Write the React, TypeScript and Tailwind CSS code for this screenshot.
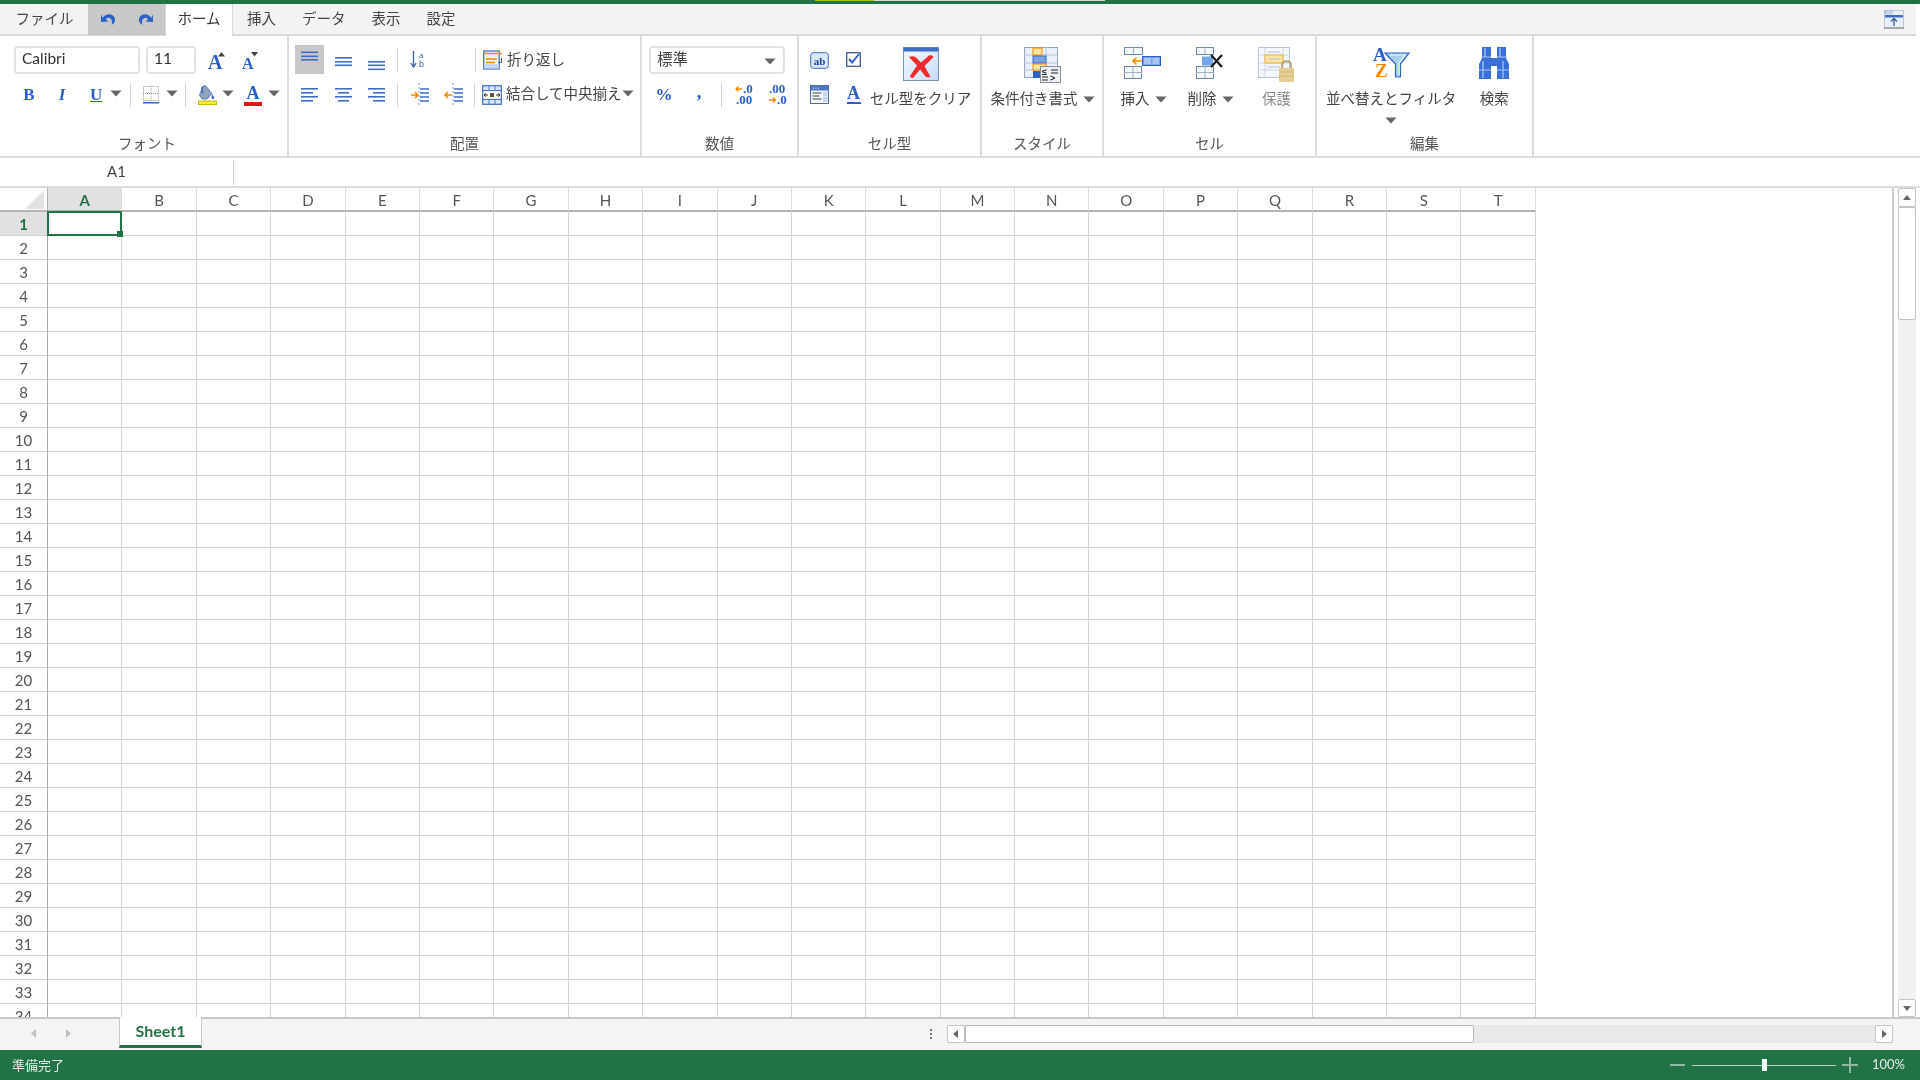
import React from "react";

const blue = "#2f62c4";
const orange = "#f08a00";
const columns = "ABCDEFGHIJKLMNOPQRST".split("");
const rows = Array.from({ length: 34 }, (_, i) => i + 1);

function Caret({ className = "" }: { className?: string }) {
  return (
    <svg width="12" height="7" viewBox="0 0 12 7" className={`shrink-0 ${className}`}>
      <path d="M0.5 0.5h11L6 6.5z" fill="#666" />
    </svg>
  );
}

function Sep({ className = "" }: { className?: string }) {
  return <div className={`w-px h-[24px] bg-[#d2d2d2] shrink-0 ${className}`} />;
}

function Lines({ ys, spans, dy = 0 }: { ys: number[]; spans: [number, number][]; dy?: number }) {
  return (
    <svg width="17" height="24" viewBox="0 0 17 24" className="shrink-0">
      {ys.map((y, i) => (
        <rect key={i} x={spans[i % spans.length][0]} y={y + dy} width={spans[i % spans.length][1]} height="1.6" fill="#3f6cc4" />
      ))}
    </svg>
  );
}

function IconBtn({ active, children }: { active?: boolean; children: React.ReactNode }) {
  return (
    <div className={`w-[29px] h-[29px] flex items-center justify-center shrink-0 ${active ? "bg-[#c8c8c8]" : ""}`}>
      {children}
    </div>
  );
}

function GrowFont({ down }: { down?: boolean }) {
  return (
    <div className={`relative flex items-end h-[20px] ${down ? "w-[17px] pl-[1px]" : "w-[17px]"}`}>
      <span className={`font-['Liberation_Serif',serif] font-bold leading-none text-[#2a5fc4] ${down ? "text-[16px]" : "text-[20px]"}`}>A</span>
      <svg width="7" height="5" viewBox="0 0 7 5" className="absolute right-0 top-0">
        <path d={down ? "M0 0h7L3.5 4.5z" : "M3.5 0L7 4.5H0z"} fill="#444" />
      </svg>
    </div>
  );
}

function BorderIcon() {
  return (
    <svg width="16" height="18" viewBox="0 0 16 18" className="shrink-0">
      <g stroke="#9a9a9a" strokeWidth="1" strokeDasharray="1 1" fill="none">
        <rect x="0.5" y="0.5" width="15" height="14" />
        <path d="M8 0v15M0 7.5h16" />
      </g>
      <rect x="0" y="16" width="16" height="1.5" fill={blue} />
    </svg>
  );
}

function FillIcon() {
  return (
    <svg width="19" height="20" viewBox="0 0 19 20" className="shrink-0">
      <path d="M5 1.5c2-1.5 3.5-.5 4 1l5 6-5 5.5H4L1.5 10z" fill="#8fa3bd" stroke="#5c7db5" />
      <path d="M5 1.5C3.5 3 3.5 6 5 8" stroke={blue} strokeWidth="1.6" fill="none" />
      <path d="M14 9c1.5 2 2.5 3 2 4.5-1 1-2.5.5-2.5-1z" fill="#3c6ac6" />
      <rect x="0.5" y="16" width="18" height="3.5" fill="#f6ea2c" stroke="#c5b91e" />
    </svg>
  );
}

function FontColorIcon() {
  return (
    <div className="w-[18px] flex flex-col items-center shrink-0">
      <span className="font-['Liberation_Serif',serif] font-bold text-[18px] leading-[16px] text-[#2a5fc4]">A</span>
      <div className="w-[18px] h-[4px] mt-[1px] bg-[#e01616]" />
    </div>
  );
}

function VerticalTextIcon() {
  return (
    <svg width="15" height="20" viewBox="0 0 15 20">
      <path d="M3.5 1v15M0.8 13l2.7 4 2.7-4" stroke="#3d5f9f" strokeWidth="1.3" fill="none" />
      <text x="9" y="8" fontSize="8" fontFamily="Liberation Sans" fill="#3d5f9f">a</text>
      <text x="9" y="17" fontSize="9" fontFamily="Liberation Sans" fill="#3d5f9f">b</text>
    </svg>
  );
}

function WrapIcon() {
  return (
    <svg width="20" height="20" viewBox="0 0 20 20" className="shrink-0">
      <rect x="0.7" y="1" width="15.5" height="18" fill="#e9f0fb" stroke="#4a76c6" strokeWidth="1.3" />
      <rect x="1" y="14" width="15" height="4.5" fill="#c4d6f2" />
      <path d="M1 3.5h18" stroke={orange} strokeWidth="1.4" />
      <path d="M3 9h11M3 12.5h9" stroke={orange} strokeWidth="1.6" />
      <path d="M18.5 8v4.5h-3" stroke="#555" strokeWidth="1" fill="none" />
    </svg>
  );
}

function MergeIcon() {
  return (
    <svg width="20" height="20" viewBox="0 0 20 20" className="shrink-0">
      <rect x="0.7" y="0.7" width="18.6" height="18.6" fill="#dde7f7" stroke="#4a76c6" strokeWidth="1.3" />
      <path d="M0 5.5h20M0 14.5h20M7 0v5M13 0v5M7 15v5M13 15v5" stroke="#4a76c6" />
      <rect x="1.5" y="6.5" width="17" height="7" fill="#f6f8fc" />
      <path d="M2 10h4M18 10h-4M2 10l2-1.6M2 10l2 1.6M18 10l-2-1.6M18 10l-2 1.6" stroke="#222" strokeWidth="0.9" />
      <rect x="8" y="8" width="4" height="4" fill="#555" />
    </svg>
  );
}

function IndentIcon({ flip }: { flip?: boolean }) {
  return (
    <svg width="20" height="24" viewBox="0 0 20 24" className="shrink-0">
      <path d="M9 0v24" stroke="#8aa4d6" strokeWidth="1" strokeDasharray="2 2" />
      <path d="M10 6h9M10 10h9M10 14h9M10 18h9" stroke="#3f6cc4" strokeWidth="1.6" />
      {flip ? (
        <path d="M8 12H1M4 9l-3 3 3 3" stroke={orange} strokeWidth="1.6" fill="none" />
      ) : (
        <path d="M1 12h7M5 9l3 3-3 3" stroke={orange} strokeWidth="1.6" fill="none" />
      )}
    </svg>
  );
}

function DecimalIcon({ more }: { more?: boolean }) {
  return (
    <svg width="19" height="22" viewBox="0 0 19 22" className="shrink-0 overflow-visible">
      <g fontFamily="Liberation Serif" fontWeight="bold" fontSize="13" fill="#2a5fc4">
        {more ? (
          <>
            <text x="8" y="9">.0</text>
            <text x="1" y="20">.00</text>
            <path d="M1 5h6M3.5 2.5L1 5l2.5 2.5" stroke={orange} strokeWidth="1.3" fill="none" />
          </>
        ) : (
          <>
            <text x="1" y="9">.00</text>
            <text x="9" y="20">.0</text>
            <path d="M1 16h6M5 13.5L7.500 16 5 18.500" stroke={orange} strokeWidth="1.3" fill="none" />
          </>
        )}
      </g>
    </svg>
  );
}

function CellStyleIcon() {
  return (
    <svg width="19" height="17" viewBox="0 0 19 17" className="shrink-0">
      <rect x="0.7" y="0.7" width="17.6" height="15.6" rx="2.5" fill="#dbe8fb" stroke="#3f6cc4" />
      <text x="9.5" y="12.5" textAnchor="middle" fontSize="11" fontFamily="Liberation Serif" fontWeight="bold" fill="#22468c">ab</text>
    </svg>
  );
}

function CheckIcon() {
  return (
    <svg width="15" height="15" viewBox="0 0 15 15" className="shrink-0">
      <rect x="0.7" y="0.7" width="13.6" height="13.6" fill="#fff" stroke="#3c5a92" strokeWidth="1.3" />
      <path d="M3 7l3.2 3.5L13 2" stroke="#2a5fc4" strokeWidth="1.9" fill="none" />
    </svg>
  );
}

function FormIcon() {
  return (
    <svg width="19" height="19" viewBox="0 0 19 19" className="shrink-0">
      <rect x="0.5" y="0.5" width="18" height="18" fill="#f4f7fc" stroke="#4f6f9f" />
      <rect x="1" y="1" width="17" height="4.5" fill="#4a76c6" />
      <path d="M3 3.2h1M5.5 3.2h1M8 3.2h1" stroke="#fff" />
      <path d="M2.5 8h9M2.5 11h7M2.5 14h9" stroke="#444" />
      <rect x="13" y="6.5" width="4.5" height="5" fill="#c9d8f0" />
      <rect x="13" y="12" width="4.5" height="5" fill="#c9d8f0" />
    </svg>
  );
}

function ClearIcon() {
  return (
    <svg width="36" height="34" viewBox="0 0 36 34">
      <defs>
        <linearGradient id="clearBg" x1="0" y1="0" x2="1" y2="1">
          <stop offset="0" stopColor="#f5f9ff" />
          <stop offset="1" stopColor="#c8dcf6" />
        </linearGradient>
      </defs>
      <rect x="0.5" y="0.5" width="35" height="33" fill="url(#clearBg)" stroke="#8094b0" />
      <rect x="0.5" y="0.5" width="35" height="4" fill="#3f6cc4" />
      <path d="M6 10c3-1 5-1 7 .5l5 5 8-7c2-.5 3.500 0 4.500 1.500l-9 9 6 11c-1.500.5-3.500.5-5-.5l-5.500-7-7 8.500c-1.500 0-2.500-.5-3-2l7-10.500z" fill="#ee2a2a" />
    </svg>
  );
}

function ConditionalIcon() {
  return (
    <svg width="37" height="36" viewBox="0 0 37 36">
      <rect x="0.5" y="0.5" width="33" height="30" fill="#e9f0fa" stroke="#93a7c2" />
      <path d="M0 8h33M0 16h33M0 23h33M10 0v30M22 0v30" stroke="#b7c6da" />
      <rect x="9" y="1" width="9" height="7" fill="#fde6a4" stroke={orange} />
      <rect x="9" y="9" width="13" height="7" fill="#7ba4e2" stroke="#3f6cc4" />
      <rect x="9" y="17" width="13" height="6" fill="#fde6a4" stroke={orange} />
      <rect x="9" y="24" width="9" height="7" fill="#2a62c8" />
      <rect x="16.500" y="19.500" width="20" height="16" fill="#eceff3" stroke="#8a8f96" />
      <text x="18" y="28" fontSize="9" fontWeight="bold" fontFamily="Liberation Sans" fill="#222">≤</text>
      <path d="M27 23h7M27 26h7" stroke="#222" />
      <path d="M18 30h6M18 33h6" stroke="#222" />
      <text x="26" y="34" fontSize="9" fontWeight="bold" fontFamily="Liberation Sans" fill="#222">&gt;</text>
    </svg>
  );
}

function MiniTable({ x, y }: { x: number; y: number }) {
  return (
    <g transform={`translate(${x} ${y})`}>
      <rect x="0.5" y="0.5" width="17" height="12" fill="#f3f7fc" stroke="#6f8aae" />
      <path d="M9 0v12M0 6.500h18" stroke="#9db1cc" />
    </g>
  );
}

function InsertIcon() {
  return (
    <svg width="37" height="32" viewBox="0 0 37 32">
      <rect x="0.5" y="0.5" width="18" height="7" fill="#f3f7fc" stroke="#6f8aae" />
      <path d="M9.500 0v7" stroke="#9db1cc" />
      <MiniTable x={0} y={19} />
      <path d="M9 14h9M12.500 10.500L9 14l3.500 3.500" stroke={orange} strokeWidth="1.6" fill="none" />
      <rect x="18.500" y="9.500" width="18" height="9" fill="#7ba4e2" stroke="#2a5fc4" />
      <rect x="20" y="11" width="7" height="6" fill="#a9c6f0" />
      <rect x="28.500" y="11" width="6.500" height="6" fill="#a9c6f0" />
    </svg>
  );
}

function DeleteIcon() {
  return (
    <svg width="30" height="32" viewBox="0 0 30 32">
      <rect x="0.5" y="0.5" width="17" height="7" fill="#f3f7fc" stroke="#6f8aae" />
      <path d="M9 0v7" stroke="#9db1cc" />
      <MiniTable x={0} y={19} />
      <rect x="6" y="9.500" width="11" height="9" fill="#72a5ea" />
      <path d="M15 8l11 12M26 8L15 20" stroke="#1a1a1a" strokeWidth="2.2" />
    </svg>
  );
}

function ProtectIcon() {
  return (
    <svg width="37" height="36" viewBox="0 0 37 36">
      <rect x="0.5" y="0.5" width="31" height="30" fill="#f3f6fb" stroke="#b9c5d6" />
      <path d="M0 8h32M0 16h32M0 23h32M7 0v30M25 0v30" stroke="#ccd6e4" />
      <rect x="7" y="8" width="18" height="8" fill="#fde6a4" stroke="#f0b040" />
      <path d="M10 5h12M10 12h12M10 20h12" stroke="#b5bfcc" />
      <path d="M24 21v-3c0-5 9-5 9 0v3" stroke="#b9a478" strokeWidth="1.8" fill="none" />
      <rect x="21" y="21" width="15" height="14" rx="1" fill="#e5cd93" />
      <path d="M21 25h15M21 29h15" stroke="#cdb477" />
    </svg>
  );
}

function SortIcon() {
  return (
    <svg width="36" height="34" viewBox="0 0 36 34" className="overflow-visible">
      <text x="0" y="14" fontSize="19" fontFamily="Liberation Serif" fontWeight="bold" fill="#2a5fc4">A</text>
      <text x="2" y="30" fontSize="19" fontFamily="Liberation Serif" fontWeight="bold" fill={orange}>Z</text>
      <path d="M12 6h24L27.500 17v13h-5V17z" fill="#a8d0f2" stroke="#2a5fc4" strokeWidth="1.200" />
      <path d="M17 8h15l-6 8v12" stroke="#eaf5ff" strokeWidth="1.200" fill="none" />
    </svg>
  );
}

function SearchIcon() {
  return (
    <svg width="32" height="32" viewBox="0 0 32 32">
      <path d="M4 0h9v11h6V0h9v11l3 6v15H19V19h-6v13H1V17l3-6z" fill="#3a70d6" />
      <path d="M7 1v9M22 1v9M5 14v17M25 14v17" stroke="#7ba6ea" strokeWidth="2" />
      <path d="M3 10h10M19 10h10M1 23h12M19 23h12" stroke="#a9c6f0" strokeWidth="1" />
    </svg>
  );
}

function PinIcon() {
  return (
    <svg width="20" height="19" viewBox="0 0 20 19">
      <rect x="0.500" y="0.500" width="19" height="17" fill="#e8f0fb" stroke="#bfc8d4" />
      <rect x="1" y="5" width="18" height="2.500" fill="#3f6cc4" />
      <rect x="1" y="1" width="7" height="3" fill="#cfdcf2" stroke="#8aa4d6" strokeWidth="0.5" />
      <path d="M10 16V9M7 11.500L10 8.500l3 3" stroke="#3b5c94" strokeWidth="1.300" fill="none" />
      <rect x="0" y="17" width="20" height="2" fill="#a8a8a8" />
    </svg>
  );
}

function BigButton({ label, icon, caret, muted, className = "" }: { label: string; icon: React.ReactNode; caret?: boolean; muted?: boolean; className?: string }) {
  return (
    <div className={`flex flex-col items-center pt-[11px] ${className}`}>
      <div className="h-[37px] flex items-start justify-center">{icon}</div>
      <div className={`mt-[5px] h-[20px] flex items-center gap-[5px] whitespace-nowrap ${muted ? "text-[#8c8c8c]" : "text-[#444]"}`}>
        {label}
        {caret && <Caret />}
      </div>
    </div>
  );
}

function Group({ label, width, labelClass = "", children }: { label: string; width: string; labelClass?: string; children: React.ReactNode }) {
  return (
    <div className={`${width} shrink-0 flex flex-col border-r-2 border-[#dcdcdc]`}>
      <div className="flex-1 min-h-0">{children}</div>
      <div className={`h-[27px] pt-[2px] flex items-center justify-center text-[#555] ${labelClass}`}>{label}</div>
    </div>
  );
}

function InputBox({ width, children, className = "" }: { width: string; children: React.ReactNode; className?: string }) {
  return (
    <div className={`${width} h-[28px] shrink-0 flex items-center px-[6px] border-2 border-[#e2e2e2] rounded-[4px] bg-white text-[15.5px] text-[#333] ${className}`}>
      {children}
    </div>
  );
}

function ScrollButton({ dir, className = "" }: { dir: "up" | "down" | "left" | "right"; className?: string }) {
  const d = { up: "M1 7L5 2l4 5z", down: "M1 3l4 5 4-5z", left: "M7 1L2 5l5 4z", right: "M3 1l5 4-5 4z" }[dir];
  return (
    <div className={`flex items-center justify-center bg-white border border-[#c4c4c4] rounded-[2px] shrink-0 ${className}`}>
      <svg width="10" height="10" viewBox="0 0 10 10">
        <path d={d} fill="#666" />
      </svg>
    </div>
  );
}

function TopTabs() {
  return (
    <div className="w-[1916px] h-[32px] shrink-0 flex bg-[#f3f3f3] border-b-2 border-[#d8d8d8] text-[14.5px] text-[#444]">
      <div className="w-[88px] flex items-center justify-center pb-[1px] pl-[1px]">ファイル</div>
      <div className="w-[77px] h-[31px] bg-[#c8c8c8] flex items-center justify-center gap-[16px] pb-[1px]">
        <svg width="20" height="18" viewBox="0 0 20 18">
          <path d="M4 8c2-5 11-5 12 1 .500 3-1.500 5-3.500 6 1-3 .500-6-2-7-2-.500-3 .500-3.500 1.500L9.500 11.500 2 12V4.500z" fill="#2c62c4" />
        </svg>
        <svg width="20" height="18" viewBox="0 0 20 18">
          <path d="M16 8C14 3 5 3 4 9c-.500 3 1.500 5 3.500 6-1-3-.500-6 2-7 2-.500 3 .500 3.500 1.500L10.500 11.500 18 12V4.500z" fill="#2c62c4" />
        </svg>
      </div>
      <div className="w-[68px] h-[32px] bg-white border-x border-[#d8d8d8] flex items-center justify-center pb-[2px] text-[#333] relative z-10">ホーム</div>
      <div className="flex items-center pl-[14px] pb-[1px] gap-[26px]">
        <span>挿入</span>
        <span>データ</span>
        <span>表示</span>
        <span>設定</span>
      </div>
      <div className="flex-1 flex items-center justify-end pr-[12px]">
        <PinIcon />
      </div>
    </div>
  );
}

function Ribbon() {
  return (
    <div className="w-[1920px] h-[120px] shrink-0 flex bg-white text-[14.5px]">
      <Group label="フォント" width="w-[289px]" labelClass="pl-[7px]">
        <div className="flex items-center pl-[14px] pt-[10px]">
          <InputBox width="w-[126px]"><span className="pb-[2px]">Calibri</span></InputBox>
          <InputBox width="w-[50px]" className="ml-[6px]"><span className="pb-[2px]">11</span></InputBox>
          <div className="ml-[12px] pt-[4px]"><GrowFont /></div>
          <div className="ml-[16px] pt-[4px]"><GrowFont down /></div>
        </div>
        <div className="flex items-center h-[24px] mt-[9px] font-['Liberation_Serif',serif] font-bold text-[17px] text-[#2a5fc4]">
          <span className="ml-[23px] w-[12px] text-center leading-none pb-[2px]">B</span>
          <span className="ml-[22px] w-[10px] text-center italic leading-none pb-[2px]">I</span>
          <span className="ml-[23px] w-[12px] text-center underline leading-none pb-[2px]">U</span>
          <Caret className="ml-[8px] mb-[4px]" />
          <Sep className="ml-[8px]" />
          <div className="ml-[12px]"><BorderIcon /></div>
          <Caret className="ml-[7px] mb-[4px]" />
          <Sep className="ml-[7px]" />
          <div className="ml-[12px]"><FillIcon /></div>
          <Caret className="ml-[5px] mb-[4px]" />
          <div className="ml-[10px]"><FontColorIcon /></div>
          <Caret className="ml-[6px] mb-[4px]" />
        </div>
      </Group>

      <Group label="配置" width="w-[353px]">
        <div className="flex items-center pl-[6px] pt-[9px] h-[38px]">
          <div className="flex gap-[4.5px]">
            <IconBtn active><Lines ys={[3.5, 7.5, 11]} spans={[[0, 17]]} /></IconBtn>
            <IconBtn><Lines ys={[8, 12, 15.500]} spans={[[0, 17]]} dy={1} /></IconBtn>
            <IconBtn><Lines ys={[12, 15.500, 19.500]} spans={[[0, 17]]} dy={1} /></IconBtn>
          </div>
          <Sep className="ml-[6px]" />
          <div className="ml-[5px] w-[29px] flex justify-center"><VerticalTextIcon /></div>
          <Sep className="ml-[43px]" />
          <div className="ml-[7px]"><WrapIcon /></div>
          <span className="ml-[4px] text-[#444]">折り返し</span>
        </div>
        <div className="flex items-center pl-[6px] mt-[9px] h-[24px]">
          <div className="flex gap-[4.5px]">
            <IconBtn><Lines ys={[5, 9, 13, 17]} spans={[[0, 17], [0, 12], [0, 17], [0, 12]]} /></IconBtn>
            <IconBtn><Lines ys={[5, 9, 13, 17]} spans={[[0, 17], [3, 11], [0, 17], [3, 11]]} /></IconBtn>
            <IconBtn><Lines ys={[5, 9, 13, 17]} spans={[[0, 17], [5, 12], [0, 17], [5, 12]]} /></IconBtn>
          </div>
          <Sep className="ml-[6px]" />
          <div className="ml-[12px]"><IndentIcon /></div>
          <div className="ml-[14px]"><IndentIcon flip /></div>
          <Sep className="ml-[10px]" />
          <div className="ml-[7px]"><MergeIcon /></div>
          <span className="ml-[4px] pb-[3px] text-[#444] whitespace-nowrap">結合して中央揃え</span>
          <Caret className="mb-[4px]" />
        </div>
      </Group>

      <Group label="数値" width="w-[157px]">
        <div className="pl-[7px] pt-[10px]">
          <InputBox width="w-[136px]" className="justify-between text-[#444]">
            <span className="pb-[1px]">標準</span>
            <Caret className="mr-[1px] mt-[2px]" />
          </InputBox>
        </div>
        <div className="flex items-center h-[24px] mt-[9px] font-['Liberation_Serif',serif] font-bold text-[#2a5fc4]">
          <span className="ml-[13px] w-[18px] text-center text-[17px] leading-none pb-[2px]">%</span>
          <span className="ml-[23px] w-[6px] text-center text-[19px] leading-none pb-[7px]">,</span>
          <Sep className="ml-[19px]" />
          <div className="ml-[13px]"><DecimalIcon more /></div>
          <div className="ml-[14px]"><DecimalIcon /></div>
        </div>
      </Group>

      <Group label="セル型" width="w-[183px]">
        <div className="flex pl-[11px]">
          <div className="w-[61px] shrink-0 pt-[16px] grid grid-cols-[36px_1fr] grid-rows-[33px_20px] items-start">
            <CellStyleIcon />
            <CheckIcon />
            <FormIcon />
            <div className="flex flex-col items-center w-[15px] font-['Liberation_Serif',serif] font-bold text-[#2a5fc4]">
              <span className="text-[18px] leading-[16px]">A</span>
              <div className="w-[14px] h-[2px] mt-[1px] bg-[#2a5fc4]" />
            </div>
          </div>
          <BigButton label="セル型をクリア" icon={<ClearIcon />} className="w-[101px] -ml-[1px]" />
        </div>
      </Group>

      <Group label="スタイル" width="w-[122px]">
        <div className="pl-[10px]">
          <BigButton label="条件付き書式" icon={<ConditionalIcon />} caret className="w-[101px]" />
        </div>
      </Group>

      <Group label="セル" width="w-[213px]">
        <div className="flex pl-[17px]">
          <BigButton label="挿入" icon={<div className="pr-[3px]"><InsertIcon /></div>} caret className="w-[45px]" />
          <BigButton label="削除" icon={<DeleteIcon />} caret className="w-[45px] ml-[22px]" />
          <BigButton label="保護" icon={<ProtectIcon />} muted className="w-[37px] ml-[25px]" />
        </div>
      </Group>

      <Group label="編集" width="w-[217px]">
        <div className="flex pl-[9px] relative">
          <div className="flex flex-col items-center">
            <BigButton label="並べ替えとフィルタ" icon={<SortIcon />} />
            <Caret className="mt-[8px]" />
          </div>
          <BigButton label="検索" icon={<SearchIcon />} className="w-[32px] ml-[22px]" />
        </div>
      </Group>
    </div>
  );
}

function FormulaBar() {
  return (
    <div className="h-[32px] shrink-0 flex items-center border-y-2 border-[#dcdcdc] bg-white">
      <div className="w-[233px] text-center text-[15px] text-[#444] pb-[2px]">A1</div>
      <div className="w-px h-[25px] bg-[#cfcfcf]" />
    </div>
  );
}

function SheetGrid() {
  return (
    <div className="grid grid-cols-[48px_repeat(20,74.4px)] grid-rows-[24px] auto-rows-[24px] w-fit text-[15px] text-[#555]">
      <div className="border-r border-b-2 border-[#b4b4b4] flex items-end justify-end pr-[3px] pb-[1px]">
        <svg width="19" height="19" viewBox="0 0 19 19">
          <path d="M19 0v19H0z" fill="#e2e2e2" />
        </svg>
      </div>
      {columns.map((c, i) => (
        <div
          key={c}
          className={`flex items-center justify-center pt-[3px] border-b-2 border-b-[#b4b4b4] border-r border-r-[#dcdcdc] ${i === 0 ? "bg-[#e1e1e1] text-[#217346] font-bold" : ""}`}
        >
          {c}
        </div>
      ))}
      {rows.map((r) => (
        <React.Fragment key={r}>
          <div
            className={`flex items-center justify-center pt-[2px] border-b border-b-[#d4d4d4] border-r border-r-[#a8a8a8] ${r === 1 ? "bg-[#e1e1e1] text-[#217346] font-bold" : ""}`}
          >
            {r}
          </div>
          {columns.map((c, i) => (
            <div key={c} className="relative border-r border-b border-[#d4d4d4]">
              {r === 1 && i === 0 && (
                <div className="absolute -left-[1.500px] -top-px -right-px -bottom-px border-2 border-[#217346] z-10">
                  <div className="absolute -right-[3px] -bottom-[3px] w-[6px] h-[6px] bg-[#217346]" />
                </div>
              )}
            </div>
          ))}
        </React.Fragment>
      ))}
    </div>
  );
}

function VerticalScroll() {
  return (
    <div className="w-[26px] shrink-0 flex flex-col pl-[4px] pr-[4px] pt-0">
      <div className="w-[18px] flex-1 flex flex-col bg-[#f1f1f1]">
        <ScrollButton dir="up" className="h-[19px]" />
        <div className="h-[113px] bg-white border border-[#c4c4c4] rounded-[2px]" />
        <div className="flex-1" />
        <ScrollButton dir="down" className="h-[18px]" />
      </div>
    </div>
  );
}

function SheetTabs() {
  return (
    <div className="h-[33px] shrink-0 flex bg-[#f4f4f4] border-t-2 border-[#c8c8c8]">
      <div className="w-[119px] flex items-center pl-[30px] gap-[28px] pb-[2px]">
        <svg width="7" height="11" viewBox="0 0 7 11"><path d="M6 1L1 5.500 6 10z" fill="#c0c0c0" /></svg>
        <svg width="7" height="11" viewBox="0 0 7 11"><path d="M1 1l5 4.500L1 10z" fill="#c0c0c0" /></svg>
      </div>
      <div className="-mt-[2px] w-[83px] h-[31px] bg-white border-x border-[#c8c8c8] border-b-[3px] border-b-[#217346] flex items-center justify-center text-[16px] font-bold text-[#217346]">
        Sheet1
      </div>
      <div className="flex-1 flex items-center pb-[2px]">
        <div className="ml-auto flex flex-col gap-[2px] mr-[15px]">
          <div className="w-[2px] h-[2px] bg-[#777]" />
          <div className="w-[2px] h-[2px] bg-[#777]" />
          <div className="w-[2px] h-[2px] bg-[#777]" />
        </div>
        <div className="w-[946px] h-[18px] flex bg-[#e9e9e9] mr-[27px]">
          <ScrollButton dir="left" className="w-[18px]" />
          <div className="w-[509px] bg-white border border-[#b8b8b8] rounded-[2px]" />
          <div className="flex-1" />
          <ScrollButton dir="right" className="w-[18px]" />
        </div>
      </div>
    </div>
  );
}

function StatusBar() {
  return (
    <div className="h-[30px] shrink-0 flex items-center bg-[#217346] text-[13px] text-[#e6efe9] pl-[12px]">
      <span className="pt-[1px]">準備完了</span>
      <div className="ml-auto flex items-center">
        <div className="w-[15px] h-[2px] bg-[#8fb9a3]" />
        <div className="ml-[7px] w-[144px] h-[1px] bg-[#b9d3c5] flex items-center">
          <div className="ml-[70px] w-[5px] h-[12px] bg-white shrink-0" />
        </div>
        <svg width="16" height="16" viewBox="0 0 16 16" className="ml-[6px]">
          <path d="M0 8h16M8 0v16" stroke="#8fb9a3" strokeWidth="2" />
        </svg>
        <span className="ml-[14px] mr-[16px] w-[32px]">100%</span>
      </div>
    </div>
  );
}

export default function App() {
  return (
    <div className="w-[1920px] h-[1080px] flex flex-col overflow-hidden bg-white blur-[0.4px] font-['Lato','Noto_Sans_CJK_JP',sans-serif]">
      <div className="h-[4px] shrink-0 bg-[#217346]">
        <div className="flex h-px ml-[815px]">
          <div className="w-[59px] bg-[#a8c018]" />
          <div className="w-[231px] bg-[#d8dcd8]" />
        </div>
      </div>
      <TopTabs />
      <Ribbon />
      <FormulaBar />
      <div className="flex-1 min-h-0 flex">
        <div className="w-[1894px] shrink-0 overflow-hidden border-r-2 border-[#cfcfcf]">
          <SheetGrid />
        </div>
        <VerticalScroll />
      </div>
      <SheetTabs />
      <StatusBar />
    </div>
  );
}
